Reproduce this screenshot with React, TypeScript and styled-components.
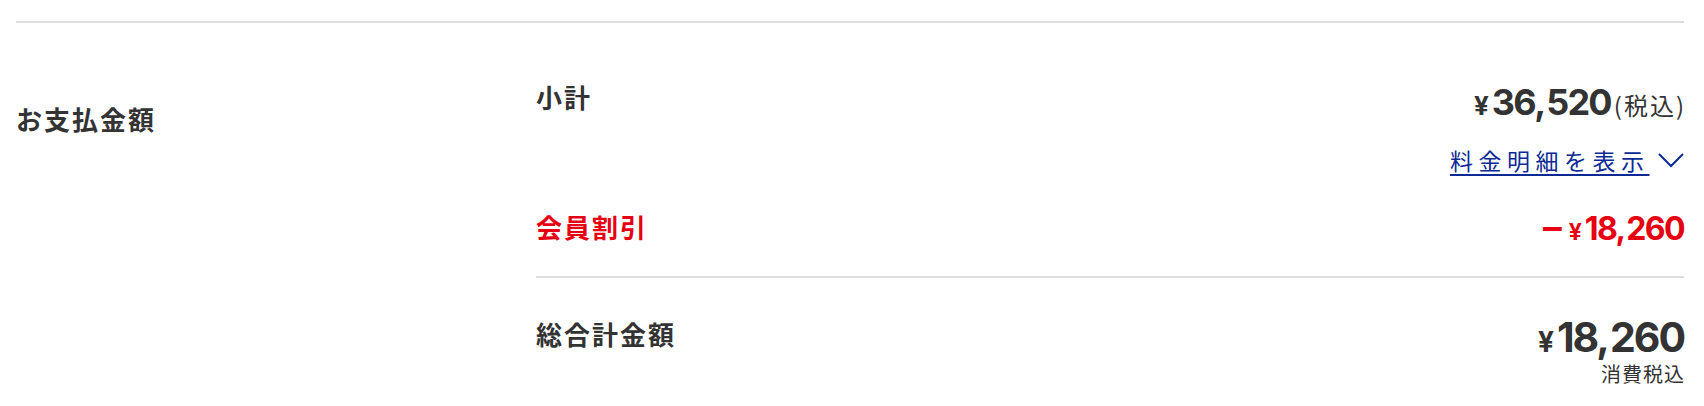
import React from "react";
import styled, { createGlobalStyle } from "styled-components";

const GlobalStyle = createGlobalStyle`
  html, body {
    margin: 0;
    padding: 0;
    background: #fff;
  }
  body {
    font-family: "Noto Sans CJK JP", "Noto Sans", sans-serif;
    color: #333;
  }
`;

const Section = styled.section`
  margin: 21px 20px 0 16px;
  border-top: 2px solid #ddd;
  display: grid;
  grid-template-columns: 520px 1fr;
`;

const SectionTitle = styled.h2`
  margin: 0;
  padding-top: 83px;
  font-size: 26px;
  line-height: 26px;
  font-weight: 700;
  letter-spacing: 2px;
`;

const Details = styled.div`
  padding-top: 61px;
  display: flex;
  flex-direction: column;
`;

const Row = styled.div<{ $tone?: "red" }>`
  display: flex;
  justify-content: space-between;
  align-items: flex-start;
  color: ${(p) => (p.$tone === "red" ? "#e60012" : "#333")};
`;

const Label = styled.div`
  font-size: 26px;
  line-height: 26px;
  font-weight: 700;
  letter-spacing: 2px;
`;

const Amounts = styled.div`
  display: flex;
  flex-direction: column;
  align-items: flex-end;
`;

const Price = styled.div<{ $size: number; $lift?: number }>`
  font-family: Inter, "Noto Sans CJK JP", sans-serif;
  font-size: ${(p) => p.$size}px;
  line-height: 1;
  font-weight: 700;
  letter-spacing: -0.05em;
  white-space: nowrap;
  margin-top: ${(p) => -(p.$lift ?? 0)}px;
`;

const Comma = styled.span`
  margin: 0 0.05em 0 -0.02em;
`;

const Yen = styled.span<{ $size: number }>`
  font-size: ${(p) => p.$size}px;
  letter-spacing: 0;
  margin-right: 3px;
`;

const Minus = styled.span`
  font-size: 1.25em;
  line-height: 0;
  font-weight: 500;
  letter-spacing: 0;
  margin-right: 3px;
`;

const TaxNote = styled.span`
  font-family: "Noto Sans CJK JP", sans-serif;
  font-size: 24px;
  font-weight: 400;
  letter-spacing: 2px;
  margin-left: 3px;
  margin-right: -2px;
`;

const DetailLink = styled.a`
  margin-top: 27px;
  display: flex;
  align-items: center;
  gap: 14px;
  color: #0b2a96;
  font-size: 23px;
  line-height: 26px;
  text-decoration: none;
  cursor: pointer;

  span {
    text-decoration: underline;
    text-decoration-thickness: 2px;
    text-underline-offset: 4px;
    letter-spacing: 5.5px;
    margin-right: -5.5px;
  }
`;

const Divider = styled.hr`
  margin: 0;
  border: 0;
  border-top: 2px solid #ddd;
`;

const SmallNote = styled.div`
  margin-top: 6px;
  font-size: 20px;
  line-height: 20px;
  letter-spacing: 1px;
  margin-right: -1px;
`;

const Chevron = () => (
  <svg width="26" height="16" viewBox="0 0 26 16" fill="none" aria-hidden="true">
    <path d="M1 2l12 12 12-12" stroke="#0b2a96" strokeWidth="2" />
  </svg>
);

// Splits a formatted amount so the thousands separator gets its own spacing.
const Amount = ({ value }: { value: string }) => {
  const parts = value.split(",");
  return (
    <>
      {parts.map((part, i) => (
        <React.Fragment key={i}>
          {i > 0 && <Comma>,</Comma>}
          {part}
        </React.Fragment>
      ))}
    </>
  );
};

export default function App() {
  return (
    <>
      <GlobalStyle />
      <Section>
        <SectionTitle>お支払金額</SectionTitle>
        <Details>
          <Row>
            <Label>小計</Label>
            <Amounts>
              <Price $size={36}>
                <Yen $size={26}>¥</Yen>
                <Amount value="36,520" />
                <TaxNote>(税込)</TaxNote>
              </Price>
              <DetailLink>
                <span>料金明細を表示</span>
                <Chevron />
              </DetailLink>
            </Amounts>
          </Row>
          <Row $tone="red" style={{ marginTop: 41, marginBottom: 31 }}>
            <Label>会員割引</Label>
            <Price $size={32} $lift={1}>
              <Minus>−</Minus>
              <Yen $size={23}>¥</Yen>
              <Amount value="18,260" />
            </Price>
          </Row>
          <Divider />
          <Row style={{ marginTop: 43 }}>
            <Label>総合計金額</Label>
            <Amounts>
              <Price $size={41} $lift={4}>
                <Yen $size={28}>¥</Yen>
                <Amount value="18,260" />
              </Price>
              <SmallNote>消費税込</SmallNote>
            </Amounts>
          </Row>
        </Details>
      </Section>
    </>
  );
}
